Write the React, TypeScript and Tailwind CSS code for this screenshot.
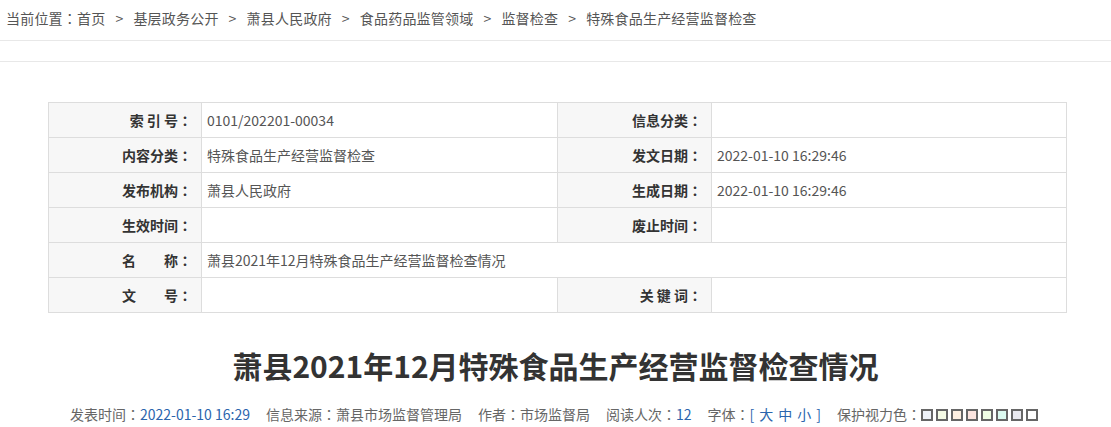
import React from 'react';

const crumbs = ['首页', '基层政务公开', '萧县人民政府', '食品药品监管领域', '监督检查', '特殊食品生产经营监督检查'];

const swatches = ['bg-[#eef2f8]', 'bg-[#f5fbe6]', 'bg-[#fdefe1]', 'bg-[#fce5e0]', 'bg-[#effde4]', 'bg-[#dcfaf0]', 'bg-[#e9e9ef]', 'bg-white'];

// 全角冒号居中显示
const C = () => <span className="font-['Noto_Sans_CJK_TC',sans-serif]">：</span>;

const Label = ({ children }: { children: React.ReactNode }) => (
  <td className="w-[153px] bg-[#f7f7f7] border border-[#dddddd] pr-[9px] text-right font-bold text-[#333] whitespace-pre">
    {children}
    <C />
  </td>
);

const Value = ({ children, colSpan }: { children?: React.ReactNode; colSpan?: number }) => (
  <td colSpan={colSpan} className="border border-[#dddddd] pl-[5px] text-[#555]">
    {children}
  </td>
);

export default function App() {
  return (
    <div className="w-[1111px] bg-white text-[14px] font-['Noto_Sans_CJK_SC','Noto_Sans',sans-serif]">
      {/* 面包屑 */}
      <div className="h-[41px] border-b border-[#e8e8e8] pl-[6px] pt-[8px] text-[#555] tracking-[0.2px]">
        当前位置<C />
        {crumbs.map((c, i) => (
          <span key={c}>
            {i > 0 && <span className="mx-[10px]">&gt;</span>}
            {c}
          </span>
        ))}
      </div>
      <div className="h-[21px] border-b border-[#e8e8e8]" />

      <div className="px-[48px] pt-[40px]">
        <table className="w-[1018px] border-collapse table-fixed">
          <colgroup>
            <col className="w-[153px]" />
            <col className="w-[356px]" />
            <col className="w-[154px]" />
            <col className="w-[355px]" />
          </colgroup>
          <tbody>
            <tr className="h-[35px]">
              <Label>索 引 号</Label>
              <Value>0101/202201-00034</Value>
              <Label>信息分类</Label>
              <Value />
            </tr>
            <tr className="h-[35px]">
              <Label>内容分类</Label>
              <Value>特殊食品生产经营监督检查</Value>
              <Label>发文日期</Label>
              <Value>2022-01-10 16:29:46</Value>
            </tr>
            <tr className="h-[35px]">
              <Label>发布机构</Label>
              <Value>萧县人民政府</Value>
              <Label>生成日期</Label>
              <Value>2022-01-10 16:29:46</Value>
            </tr>
            <tr className="h-[35px]">
              <Label>生效时间</Label>
              <Value />
              <Label>废止时间</Label>
              <Value />
            </tr>
            <tr className="h-[35px]">
              <Label>名　　称</Label>
              <Value colSpan={3}>萧县2021年12月特殊食品生产经营监督检查情况</Value>
            </tr>
            <tr className="h-[35px]">
              <Label>文　　号</Label>
              <Value />
              <Label>关 键 词</Label>
              <Value />
            </tr>
          </tbody>
        </table>
      </div>

      <h1 className="mt-[30px] text-center text-[30px] leading-[44px] font-bold text-[#333]">
        萧县2021年12月特殊食品生产经营监督检查情况
      </h1>

      <div className="mt-[17px] flex justify-center items-center text-[#666]">
        <span>发表时间<C /><span className="text-[#2b65ad]">2022-01-10 16:29</span></span>
        <span className="ml-[16px]">信息来源<C />萧县市场监督管理局</span>
        <span className="ml-[16px]">作者<C />市场监督局</span>
        <span className="ml-[16px]">阅读人次<C /><span className="text-[#2b65ad]">12</span></span>
        <span className="ml-[16px] flex items-center">
          字体<C />
          <span className="text-[#2b65ad] flex gap-[5px]">
            <span>[</span><span>大</span><span>中</span><span>小</span><span>]</span>
          </span>
        </span>
        <span className="ml-[16px] flex items-center">
          保护视力色<C />
          {swatches.map((s) => (
            <span key={s} className={`inline-block w-[12px] h-[12px] mr-[3px] border-2 border-[#666] ${s}`} />
          ))}
        </span>
      </div>
    </div>
  );
}
